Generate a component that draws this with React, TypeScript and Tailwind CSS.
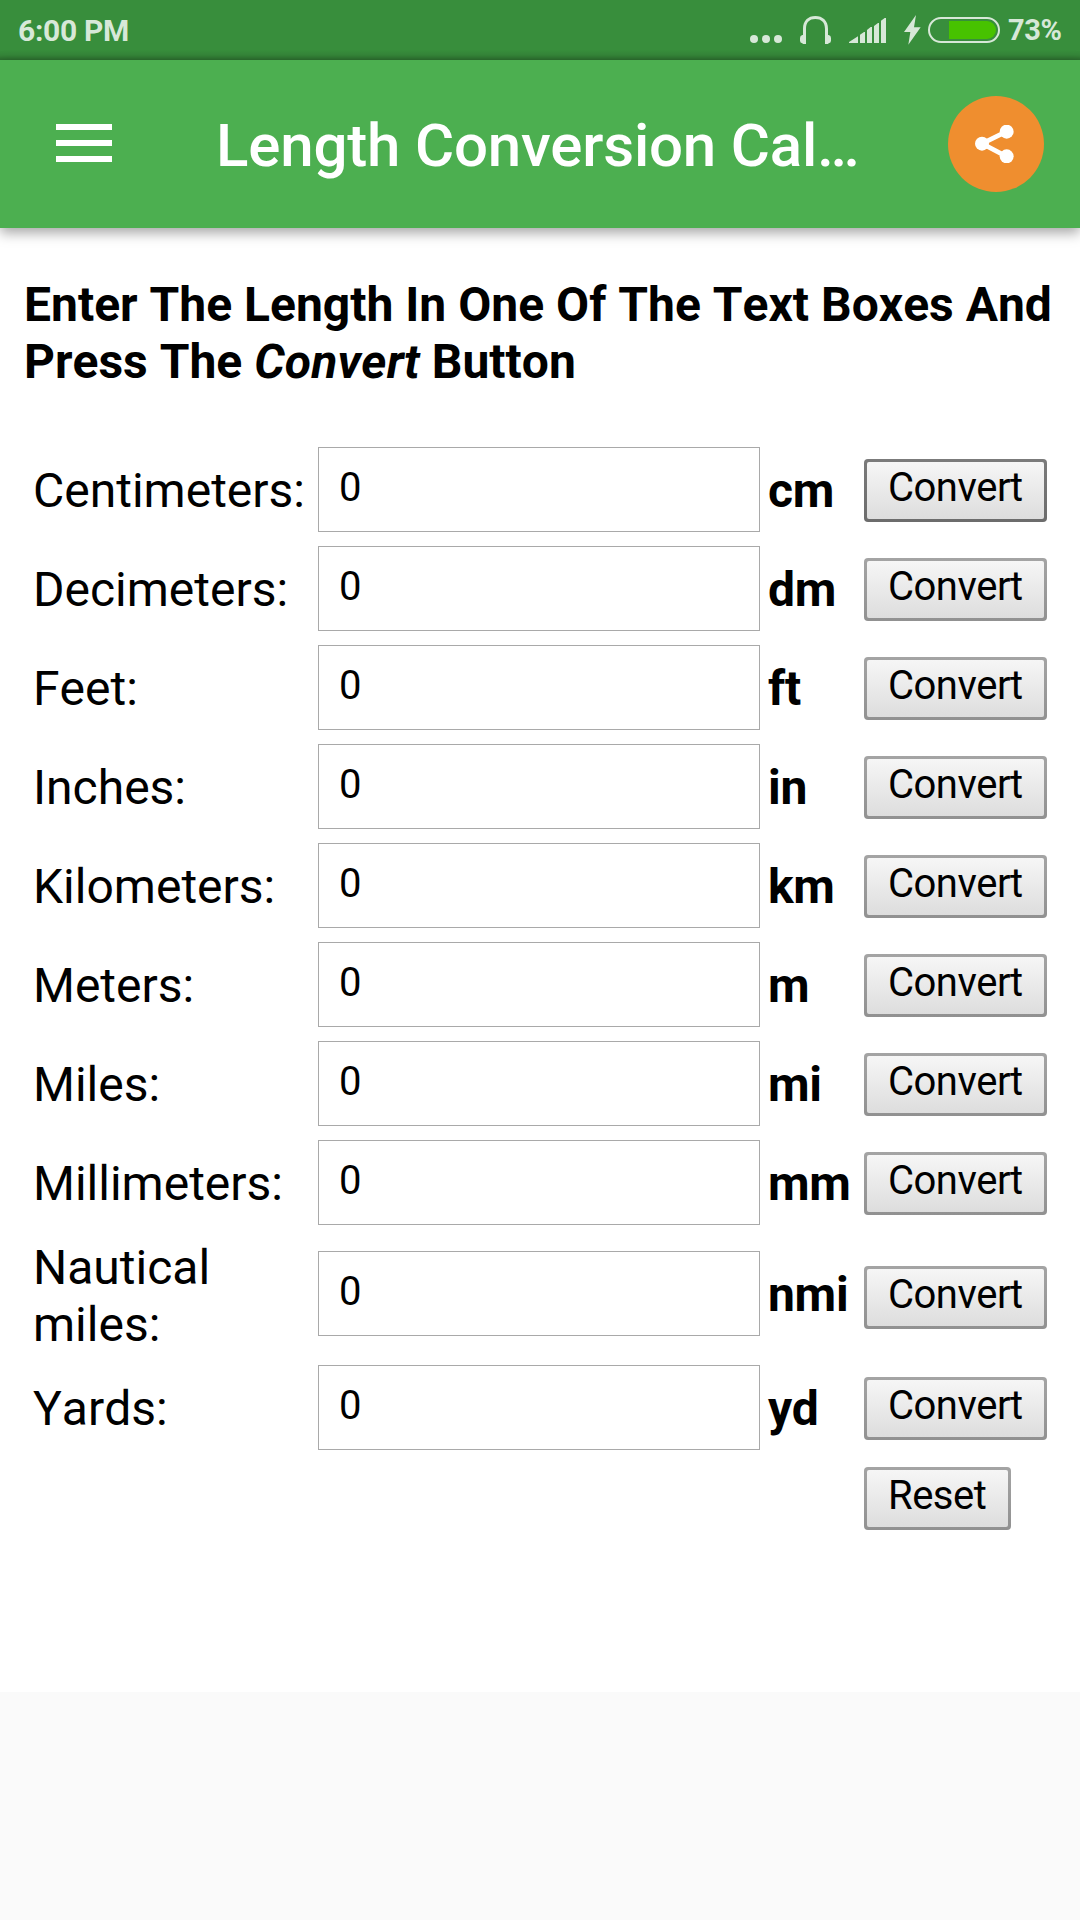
import { useState } from 'react';

type Unit = {
  name: string;
  symbol: string;
  meters: number;
};

const units: Unit[] = [
  { name: 'Centimeters', symbol: 'cm', meters: 0.01 },
  { name: 'Decimeters', symbol: 'dm', meters: 0.1 },
  { name: 'Feet', symbol: 'ft', meters: 0.3048 },
  { name: 'Inches', symbol: 'in', meters: 0.0254 },
  { name: 'Kilometers', symbol: 'km', meters: 1000 },
  { name: 'Meters', symbol: 'm', meters: 1 },
  { name: 'Miles', symbol: 'mi', meters: 1609.344 },
  { name: 'Millimeters', symbol: 'mm', meters: 0.001 },
  { name: 'Nautical miles', symbol: 'nmi', meters: 1852 },
  { name: 'Yards', symbol: 'yd', meters: 0.9144 },
];

const zeros = units.map(() => '0');

function StatusBar() {
  return (
    <div className="h-[60px] shrink-0 flex items-start bg-[#388e3c] bg-[linear-gradient(to_bottom,transparent_50px,rgba(0,0,0,0.06)_55px,rgba(0,0,0,0.24)_60px)] text-[#d7e8d8]">
      <span className="ml-[18px] mt-[13px] text-[30px] leading-[36px] font-bold tracking-[-0.3px]">6:00 PM</span>

      {/* Notifications */}
      <svg className="ml-auto mt-[35px] w-[32px] h-[8px]" viewBox="0 0 32 8" fill="currentColor">
        <circle cx="4" cy="4" r="4" />
        <circle cx="16" cy="4" r="4" />
        <circle cx="28" cy="4" r="4" />
      </svg>

      {/* Headphones */}
      <svg className="ml-[18px] mt-[16px] w-[31px] h-[28px]" viewBox="0 0 93 84" fill="currentColor">
        <path d="M9 84V38C9 14 24 0 46 0s38 14 38 38v46h-9V38C75 19 64 9 46 9S18 19 18 38v46z" />
        <path d="M18 57H7q-7 2-7 9v8q0 7 7 8l2 2h9zM75 57h11q7 2 7 9v8q0 7-7 8l-2 2h-9z" />
      </svg>

      {/* Signal */}
      <svg className="ml-[18px] mt-[18px] w-[37px] h-[25px]" viewBox="0 0 111 75" fill="currentColor">
        <path d="M0 75v-3l27-17v20zM33 75V50l12-8h3v33zM54 75V36l11-9h4v48zM75 75V24l12-9h3v60zM96 75V8l11-8h4v75z" />
      </svg>

      {/* Battery */}
      <svg className="ml-[18px] mt-[15px] w-[17px] h-[30px]" viewBox="0 0 51 90" fill="currentColor">
        <path d="M36 0 0 51h19l-6 38 37-52H30z" />
      </svg>
      <div className="ml-[7px] mt-[17px] w-[72px] h-[26px] rounded-full border-2 border-[#d7e8d8] p-[2px] pl-[19px]">
        <div className="h-[18px] w-[47px] rounded-r-full bg-[#47c200]" />
      </div>
      <div className="ml-[8px] mt-[12px] w-[72px] text-[29px] leading-[36px] font-bold tracking-[-0.4px]">73%</div>
    </div>
  );
}

function Toolbar() {
  return (
    <header className="relative h-[168px] shrink-0 flex items-start bg-[#4caf50] text-white shadow-[0_5px_12px_rgba(0,0,0,0.35)]">
      <button aria-label="Menu" className="ml-[56px] mt-[64px] w-[56px] flex flex-col gap-[10px]">
        <span className="h-[6px] w-full bg-white" />
        <span className="h-[6px] w-full bg-white" />
        <span className="h-[6px] w-full bg-white" />
      </button>
      <h1 className="ml-[104px] mt-[51px] w-[660px] text-[60px] leading-[70px] font-medium tracking-[-0.18px] whitespace-nowrap">
        Length Conversion Cal…
      </h1>
      <button aria-label="Share" className="ml-[72px] mt-[36px] size-[96px] rounded-full bg-[#ef8e2f]">
        <svg className="ml-[27px] w-[39px] h-[38px]" viewBox="0 0 117 114" fill="white">
          <path d="M94 20 21 56l73 38" fill="none" stroke="white" strokeWidth="14" />
          <circle cx="21" cy="56" r="21" />
          <circle cx="95" cy="20" r="21" />
          <circle cx="95" cy="94" r="21" />
        </svg>
      </button>
    </header>
  );
}

type ActionButtonProps = {
  label: string;
  focused?: boolean;
  className?: string;
  onClick: () => void;
};

function ActionButton({ label, focused, className = '', onClick }: ActionButtonProps) {
  const frame = focused
    ? 'bg-[linear-gradient(to_bottom,#7b7b7b,#6c6c6c)]'
    : 'bg-[linear-gradient(to_bottom,#a4a4a4,#919191)]';

  return (
    <button onClick={onClick} className={`col-start-4 h-[63px] rounded-[4px] p-[3px] ${frame} ${className}`}>
      <span className="flex h-[57px] items-start rounded-[2px] bg-[linear-gradient(to_bottom,#f6f6f6,#dddddd)] pl-[21px] pt-[2px] text-[40px] leading-[47px] tracking-[-0.5px]">
        {label}
      </span>
    </button>
  );
}

export default function App() {
  const [values, setValues] = useState(zeros);

  const convert = (from: number) => {
    const meters = Number(values[from]) * units[from].meters;
    setValues(units.map((unit) => String(meters / unit.meters)));
  };

  return (
    <div className="h-[1920px] w-[1080px] flex flex-col overflow-hidden bg-[#fafafa] text-black font-[Roboto,sans-serif]">
      <StatusBar />
      <Toolbar />

      <main className="h-[1464px] bg-white pt-[48px] [font-kerning:none]">
        <h2 className="ml-[24px] text-[48px] leading-[57px] font-bold whitespace-nowrap">
          Enter The Length In One Of The Text Boxes And
          <br />
          Press The <i className="tracking-[0.2px]">Convert</i> Button
        </h2>

        <div className="mt-[57px] ml-[33px]">
          {units.map((unit, i) => {
            // The two-line label makes its row taller
            const tall = unit.symbol === 'nmi';
            return (
              <div
                key={unit.symbol}
                className={`grid grid-cols-[285px_450px_96px_183px] items-start ${tall ? 'h-[126px]' : 'h-[99px]'}`}
              >
                <label
                  htmlFor={unit.symbol}
                  className={`text-[48px] leading-[57px] ${tall ? 'w-[200px]' : 'mt-[15px]'}`}
                >
                  {`${unit.name}:`}
                </label>
                <input
                  id={unit.symbol}
                  value={values[i]}
                  onChange={(e) => setValues(values.map((v, j) => (j === i ? e.target.value : v)))}
                  className={`h-[85px] w-[442px] border border-[#a9a9a9] bg-white pl-[20px] pr-[20px] pb-[4px] text-[40px] outline-none ${tall ? 'mt-[12px]' : ''}`}
                />
                <span
                  className={`text-[48px] leading-[57px] font-bold tracking-[-0.3px] ${tall ? 'mt-[27px]' : 'mt-[15px]'}`}
                >
                  {unit.symbol}
                </span>
                <ActionButton
                  label="Convert"
                  focused={i === 0}
                  className={tall ? 'mt-[27px]' : 'mt-[12px]'}
                  onClick={() => convert(i)}
                />
              </div>
            );
          })}
          <div className="grid grid-cols-[285px_450px_96px_183px] items-start">
            <ActionButton label="Reset" className="mt-[3px] w-[147px]" onClick={() => setValues(zeros)} />
          </div>
        </div>
      </main>
    </div>
  );
}
